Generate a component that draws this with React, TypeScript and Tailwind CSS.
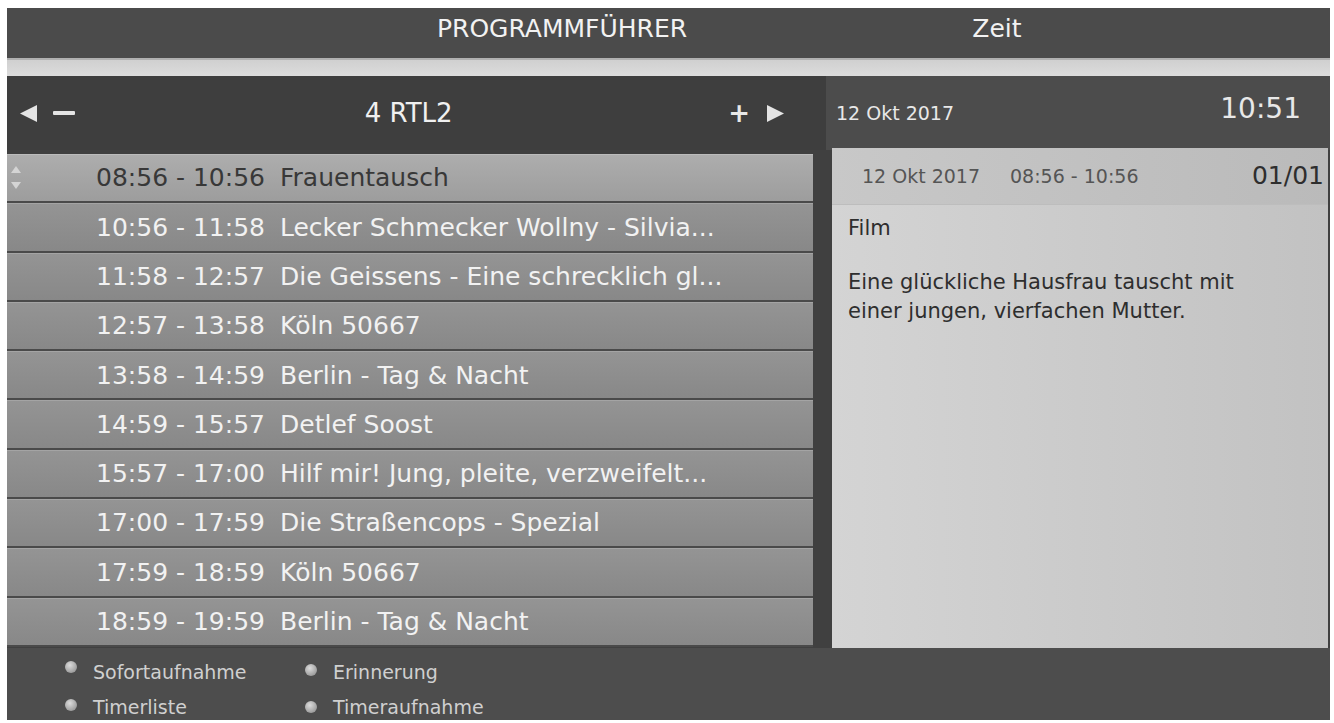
import React from 'react';

type Show = { time: string; title: string };

const shows: Show[] = [
  { time: '08:56 - 10:56', title: 'Frauentausch' },
  { time: '10:56 - 11:58', title: 'Lecker Schmecker Wollny - Silvia...' },
  { time: '11:58 - 12:57', title: 'Die Geissens - Eine schrecklich gl...' },
  { time: '12:57 - 13:58', title: 'Köln 50667' },
  { time: '13:58 - 14:59', title: 'Berlin - Tag & Nacht' },
  { time: '14:59 - 15:57', title: 'Detlef Soost' },
  { time: '15:57 - 17:00', title: 'Hilf mir! Jung, pleite, verzweifelt...' },
  { time: '17:00 - 17:59', title: 'Die Straßencops - Spezial' },
  { time: '17:59 - 18:59', title: 'Köln 50667' },
  { time: '18:59 - 19:59', title: 'Berlin - Tag & Nacht' },
];

const font = { fontFamily: '"DejaVu Sans", "Liberation Sans", sans-serif' };

const Dot = () => (
  <span className="inline-block h-[12px] w-[12px] rounded-full bg-[radial-gradient(circle_at_40%_35%,#dcdcdc,#858585)]" />
);

const ScrollMark = () => (
  <svg width="12" height="26" viewBox="0 0 12 26">
    <polygon points="6,1 11,8 1,8" fill="#d4d4d4" />
    <polygon points="1,17 11,17 6,24" fill="#d4d4d4" />
  </svg>
);

const Row = ({ show, selected }: { show: Show; selected: boolean }) => (
  <div
    className={
      'flex h-[49.3px] items-center border-t border-b-2 pl-[3px] ' +
      (selected
        ? 'border-t-[#bcbcbc] border-b-[#4a4a4a] bg-gradient-to-b from-[#adadad] to-[#9d9d9d] text-[#383838]'
        : 'border-t-[#a4a4a4] border-b-[#4a4a4a] bg-gradient-to-b from-[#949494] to-[#888888] text-[#f2f2f2]')
    }
  >
    <div className="w-[12px]">{selected && <ScrollMark />}</div>
    <span className="ml-[74px] w-[184px] whitespace-nowrap text-[25px]">{show.time}</span>
    <span className="whitespace-nowrap text-[25px]">{show.title}</span>
  </div>
);

export default function App() {
  return (
    <div className="h-[723px] w-[1334px] bg-white pl-[7px] pr-[4px] pt-[8px] pb-[3px]" style={font}>
      <div className="flex h-full flex-col">
        {/* title bar */}
        <div className="flex h-[50px] items-center bg-[#4b4b4b] pb-[8px] text-[25px] text-[#f2f2f2]">
          <div className="ml-[355px] w-[400px] text-center">PROGRAMMFÜHRER</div>
          <div className="ml-[135px] w-[200px] text-center">Zeit</div>
        </div>
        <div className="h-[18px] border-t-2 border-t-[#b0b0b0] bg-gradient-to-b from-[#d0d0d0] to-[#dcdcdc]" />

        {/* channel bar */}
        <div className="flex h-[74px]">
          <div className="flex w-[819px] items-center bg-[#3e3e3e] text-[#f0f0f0]">
            <svg width="17" height="17" viewBox="0 0 16 16" className="ml-[13px]">
              <polygon points="0,8 16,0 16,16" fill="#e4e4e4" />
            </svg>
            <span className="ml-[16px] h-[4px] w-[22px] rounded-[1px] bg-[#e4e4e4]" />
            <div className="flex-1 text-center text-[26px] pl-[14px]">4 RTL2</div>
            <span className="text-[26px] font-bold leading-none text-[#e8e8e8]">+</span>
            <svg width="17" height="17" viewBox="0 0 16 16" className="ml-[17px] mr-[42px]">
              <polygon points="16,8 0,0 0,16" fill="#e4e4e4" />
            </svg>
          </div>
          <div className="flex flex-1 items-center justify-between bg-[#4c4c4c] pl-[10px] pr-[29px] text-[#e8e8e8]">
            <span className="text-[19px]">12 Okt 2017</span>
            <span className="-mt-[8px] text-[28px]">10:51</span>
          </div>
        </div>

        {/* main */}
        <div className="flex flex-1 bg-[#404040]">
          <div className="w-[806px] pt-[4px]">
            {shows.map((s, i) => (
              <Row key={i} show={s} selected={i === 0} />
            ))}
          </div>
          <div className="ml-[19px] mr-[2px] -mt-[2px] flex flex-1 flex-col bg-gradient-to-r from-[#d4d4d4] to-[#c2c2c2]">
            <div className="flex h-[57px] items-center border-b border-b-[#bdbdbd] bg-gradient-to-r from-[#c8c8c8] to-[#bababa] pl-[30px] pr-[4px] text-[#555]">
              <span className="text-[19px]">12 Okt 2017</span>
              <span className="ml-[30px] text-[19px]">08:56 - 10:56</span>
              <span className="ml-auto text-[25px] text-[#2e2e2e]">01/01</span>
            </div>
            <div className="px-[16px] pt-[9px] text-[21px] text-[#2e2e2e]">
              <div className="leading-[29px]">Film</div>
              <div className="mt-[25px] leading-[29px]">
                Eine glückliche Hausfrau tauscht mit
                <br />
                einer jungen, vierfachen Mutter.
              </div>
            </div>
          </div>
        </div>

        {/* footer */}
        <div className="h-[72px] bg-[#4d4d4d] pl-[58px] pt-[10px] text-[19px] text-[#d0d0d0]">
          <div className="grid grid-cols-[240px_240px] gap-y-[6px]">
            <div className="flex items-center gap-[16px]"><span className="-mt-[12px]"><Dot /></span>Sofortaufnahme</div>
            <div className="flex items-center gap-[16px]"><span className="-mt-[6px]"><Dot /></span>Erinnerung</div>
            <div className="flex items-center gap-[16px]"><span className="-mt-[6px]"><Dot /></span>Timerliste</div>
            <div className="flex items-center gap-[16px]"><Dot />Timeraufnahme</div>
          </div>
        </div>
      </div>
    </div>
  );
}
